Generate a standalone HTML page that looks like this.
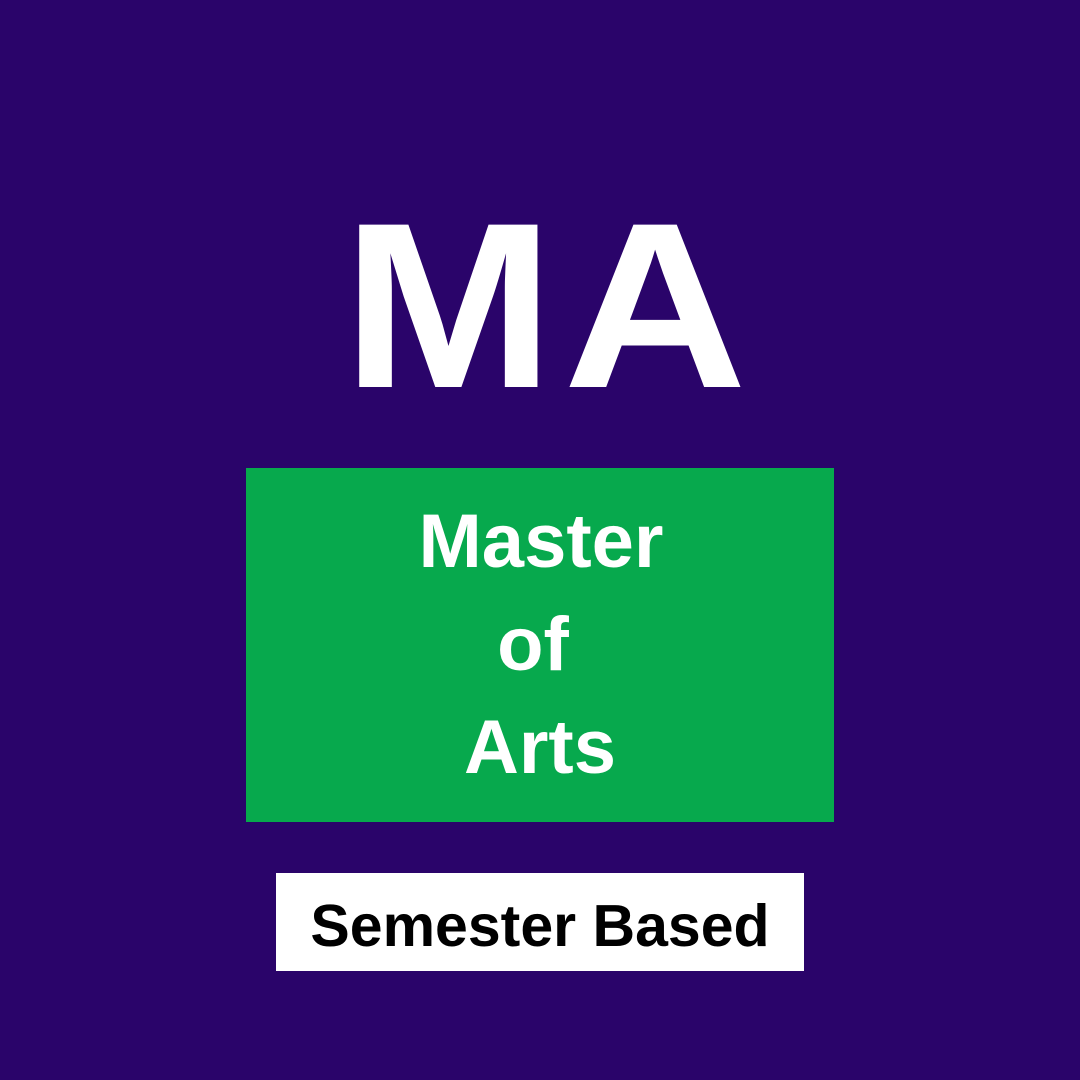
<!DOCTYPE html>
<html><head><meta charset="utf-8"><style>html,body{margin:0;padding:0;background:#2a046a;}svg{display:block}</style></head>
<body>
<svg width="1080" height="1080" viewBox="0 0 1080 1080" xmlns="http://www.w3.org/2000/svg">
<rect width="1080" height="1080" fill="#2a046a"/>
<g transform="translate(549,0) scale(1.08,1)">
<text x="0" y="387" text-anchor="middle" font-family="Liberation Sans, sans-serif" font-weight="bold" font-size="236" fill="#ffffff" letter-spacing="8">MA</text>
</g>
<rect x="246" y="468" width="588" height="354" fill="#07a94d"/>
<g font-family="Liberation Sans, sans-serif" font-weight="bold" font-size="76" fill="#ffffff" text-anchor="middle">
<text x="541" y="567">Master</text>
<text x="533" y="670">of</text>
<text x="540" y="773">Arts</text>
</g>
<rect x="276" y="873" width="528" height="98" fill="#ffffff"/>
<text x="540" y="946" text-anchor="middle" font-family="Liberation Sans, sans-serif" font-weight="bold" font-size="59" fill="#000000">Semester Based</text>
</svg>
</body></html>
